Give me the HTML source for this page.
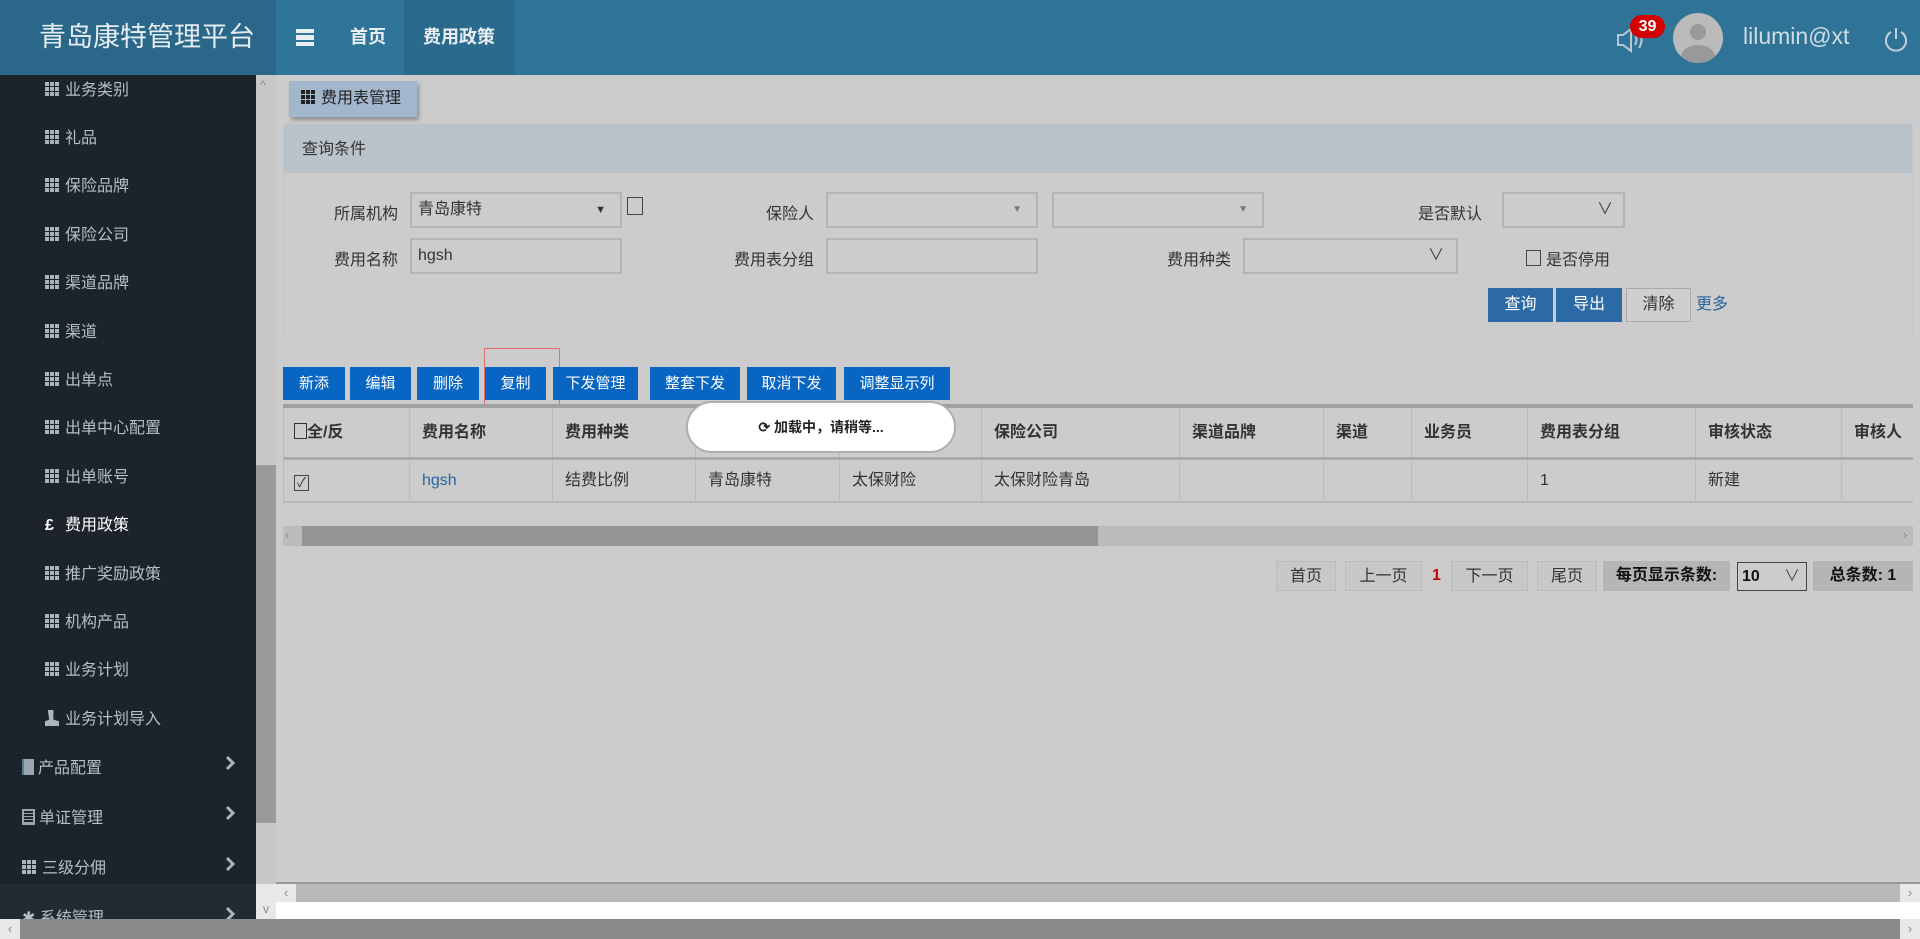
<!DOCTYPE html>
<html><head><meta charset="utf-8">
<style>
*{margin:0;padding:0;box-sizing:border-box}
body{width:1920px;height:939px;overflow:hidden;background:#ccc;font-family:"Liberation Sans","Noto Sans CJK SC",sans-serif;font-size:16px;color:#333;position:relative}
.a{position:absolute}
#hdr{left:0;top:0;width:1920px;height:75px;background:#2f7396}
#logo{left:0;top:0;width:276px;height:75px;background:#2b6788;color:#e6edf2;font-size:27px;line-height:75px;padding-left:39px}
.nav{top:0;height:75px;line-height:75px;color:#e8eef2;font-weight:bold;font-size:18px;text-align:center}
#side{left:0;top:75px;width:256px;height:844px;background:#1c232a;color:#b6bfc6;overflow:hidden}
.si{position:absolute;left:45px;font-size:16px;height:24px;line-height:24px}
.grid{display:inline-block;width:14px;height:14px;margin-right:6px;vertical-align:-1px;background:
linear-gradient(90deg,transparent 4px,#1c232a 4px,#1c232a 5px,transparent 5px,transparent 9px,#1c232a 9px,#1c232a 10px,transparent 10px),
linear-gradient(transparent 4px,#1c232a 4px,#1c232a 5px,transparent 5px,transparent 9px,#1c232a 9px,#1c232a 10px,transparent 10px),#aab4bc}
.arr{position:absolute;left:224px;width:12px;height:16px}
.btnb{position:absolute;top:367px;height:33px;background:#0866c2;color:#fff;font-size:15px;line-height:33px;text-align:center}
.lbl{position:absolute;font-size:16px;text-align:right;width:120px}
.inp{position:absolute;height:36px;border:2px solid #b4b4b4;background:#ccc;font-size:16px;line-height:32px;padding-left:6px}
.th,.td{position:absolute;font-size:16px;padding-left:12px;border-right:1px solid #bbb}
.th{top:408px;height:49px;line-height:49px;font-weight:bold}
.td{top:460px;height:41px;line-height:41px}
.pg{position:absolute;top:561px;height:30px;line-height:30px;font-size:16px;text-align:center;border:1px solid #bbb;background:#c8c8c8}
</style></head><body>
<div id="hdr" class="a"></div>
<div id="logo" class="a">青岛康特管理平台</div>
<div class="a nav" style="left:276px;width:128px;background:#2f7499"><span style="position:absolute;left:20px;top:29px;width:18px;height:17px;background:linear-gradient(#e8eef2 0 4px,transparent 4px 6px,#e8eef2 6px 11px,transparent 11px 13px,#e8eef2 13px 17px)"></span><span style="position:absolute;left:74px">首页</span></div>
<div class="a nav" style="left:404px;width:110px;background:#2a6a8c">费用政策</div>
<svg class="a" style="left:1615px;top:26px" width="32" height="28" viewBox="0 0 32 28"><path d="M3 9h5l8-6v22l-8-6H3z" fill="none" stroke="#b9c8d3" stroke-width="2"/><path d="M20 9q3 5 0 10M24 6q5 8 0 16" fill="none" stroke="#b9c8d3" stroke-width="2"/></svg>
<div class="a" style="left:1630px;top:15px;width:35px;height:23px;border-radius:12px;background:#d20000;color:#fff;font-weight:bold;font-size:16px;text-align:center;line-height:23px">39</div>
<div class="a" style="left:1673px;top:13px;width:50px;height:50px;border-radius:50%;background:#bbb;overflow:hidden"><div class="a" style="left:17px;top:11px;width:16px;height:16px;border-radius:50%;background:#999"></div><div class="a" style="left:8px;top:32px;width:34px;height:24px;border-radius:50%;background:#999"></div></div>
<div class="a" style="left:1743px;top:23px;color:#d0dce4;font-size:23px">lilumin@xt</div>
<svg class="a" style="left:1882px;top:26px" width="28" height="28" viewBox="0 0 28 28"><path d="M9 6A10 10 0 1 0 19 6" fill="none" stroke="#c4d1da" stroke-width="2"/><path d="M14 2v11" stroke="#c4d1da" stroke-width="2"/></svg>

<div id="side" class="a">
<div class="si" style="top:4px"><span class="grid"></span>业务类别</div>
<div class="si" style="top:52px"><span class="grid"></span>礼品</div>
<div class="si" style="top:100px"><span class="grid"></span>保险品牌</div>
<div class="si" style="top:149px"><span class="grid"></span>保险公司</div>
<div class="si" style="top:197px"><span class="grid"></span>渠道品牌</div>
<div class="si" style="top:246px"><span class="grid"></span>渠道</div>
<div class="si" style="top:294px"><span class="grid"></span>出单点</div>
<div class="si" style="top:342px"><span class="grid"></span>出单中心配置</div>
<div class="si" style="top:391px"><span class="grid"></span>出单账号</div>
<div class="si" style="top:439px;color:#fff"><span style="display:inline-block;width:14px;margin-right:6px;font-weight:bold">£</span>费用政策</div>
<div class="si" style="top:488px"><span class="grid"></span>推广奖励政策</div>
<div class="si" style="top:536px"><span class="grid"></span>机构产品</div>
<div class="si" style="top:584px"><span class="grid"></span>业务计划</div>
<div class="si" style="top:633px"><span style="display:inline-block;width:14px;height:16px;margin-right:6px;vertical-align:-2px;background:#aab4bc;clip-path:polygon(20% 0,60% 0,60% 60%,100% 70%,100% 100%,0 100%,0 70%,30% 60%)"></span>业务计划导入</div>
<div class="si" style="left:22px;top:682px"><span style="display:inline-block;width:12px;height:16px;margin-right:4px;vertical-align:-2px;background:#9aa6af;border-left:2px solid #5a7a90"></span>产品配置</div>
<svg class="arr" style="top:680px" viewBox="0 0 12 16"><path d="M3 2l6 6-6 6" fill="none" stroke="#a9b4bd" stroke-width="3"/></svg>
<div class="si" style="left:22px;top:732px"><span style="display:inline-block;width:13px;height:16px;margin-right:4px;vertical-align:-2px;border:2px solid #9aa6af;background:repeating-linear-gradient(#1c232a 0 2px,#9aa6af 2px 3px)"></span>单证管理</div>
<svg class="arr" style="top:730px" viewBox="0 0 12 16"><path d="M3 2l6 6-6 6" fill="none" stroke="#a9b4bd" stroke-width="3"/></svg>
<div class="si" style="left:22px;top:782px"><span class="grid"></span>三级分佣</div>
<svg class="arr" style="top:781px" viewBox="0 0 12 16"><path d="M3 2l6 6-6 6" fill="none" stroke="#a9b4bd" stroke-width="3"/></svg>
<div class="a" style="left:0;top:809px;width:256px;height:40px;background:#222b31"></div>
<div class="si" style="left:22px;top:832px">✱ 系统管理</div>
<svg class="arr" style="top:831px" viewBox="0 0 12 16"><path d="M3 2l6 6-6 6" fill="none" stroke="#a9b4bd" stroke-width="3"/></svg>
</div>
<div class="a" style="left:256px;top:75px;width:20px;height:827px;background:#c8c8c8"></div>
<div class="a" style="left:256px;top:465px;width:20px;height:358px;background:#9a9a9a"></div>
<div class="a" style="left:260px;top:78px;color:#888;font-size:12px">^</div>
<div class="a" style="left:256px;top:884px;width:20px;height:35px;background:#e8e8e8;color:#888;font-size:12px;text-align:center;line-height:50px">v</div>

<div class="a" style="left:289px;top:81px;width:128px;height:36px;background:#a2b6cc;box-shadow:2px 3px 4px rgba(0,0,0,.3);line-height:36px;padding-left:12px;font-size:16px;color:#222"><span class="grid" style="background:linear-gradient(90deg,transparent 4px,#a2b6cc 4px,#a2b6cc 5px,transparent 5px,transparent 9px,#a2b6cc 9px,#a2b6cc 10px,transparent 10px),linear-gradient(transparent 4px,#a2b6cc 4px,#a2b6cc 5px,transparent 5px,transparent 9px,#a2b6cc 9px,#a2b6cc 10px,transparent 10px),#222"></span>费用表管理</div>

<div class="a" style="left:283px;top:123px;width:1630px;height:218px;border:1px solid #c3c8cd"></div>
<div class="a" style="left:284px;top:124px;width:1628px;height:49px;background:#bbc3ca;line-height:51px;padding-left:18px;font-size:16px">查询条件</div>

<div class="lbl" style="left:278px;top:200px">所属机构</div>
<div class="inp" style="left:410px;top:192px;width:212px">青岛康特<span style="position:absolute;right:14px;font-size:11px">▼</span></div>
<div class="a" style="left:627px;top:197px;width:16px;height:18px;border:1px solid #444"></div>
<div class="lbl" style="left:694px;top:200px">保险人</div>
<div class="inp" style="left:826px;top:192px;width:212px"><span style="position:absolute;right:14px;font-size:10px;color:#777">▼</span></div>
<div class="inp" style="left:1052px;top:192px;width:212px"><span style="position:absolute;right:14px;font-size:10px;color:#777">▼</span></div>
<div class="lbl" style="left:1362px;top:200px">是否默认</div>
<div class="inp" style="left:1502px;top:192px;width:123px"><span style="position:absolute;right:10px;color:#444">∨</span></div>

<div class="lbl" style="left:278px;top:246px">费用名称</div>
<div class="inp" style="left:410px;top:238px;width:212px">hgsh</div>
<div class="lbl" style="left:694px;top:246px">费用表分组</div>
<div class="inp" style="left:826px;top:238px;width:212px"></div>
<div class="lbl" style="left:1111px;top:246px">费用种类</div>
<div class="inp" style="left:1243px;top:238px;width:215px"><span style="position:absolute;right:12px;color:#444">∨</span></div>
<div class="a" style="left:1526px;top:250px;width:15px;height:16px;border:1px solid #444"></div>
<div class="a" style="left:1546px;top:246px;font-size:16px">是否停用</div>

<div class="a" style="left:1488px;top:288px;width:65px;height:34px;background:#2b6aa5;color:#fff;text-align:center;line-height:34px">查询</div>
<div class="a" style="left:1556px;top:288px;width:66px;height:34px;background:#2b6aa5;color:#fff;text-align:center;line-height:34px">导出</div>
<div class="a" style="left:1626px;top:288px;width:65px;height:34px;border:1px solid #aaa;background:#cfcfcf;text-align:center;line-height:32px">清除</div>
<div class="a" style="left:1696px;top:290px;color:#2a64a0">更多</div>

<div class="btnb" style="left:283px;width:62px">新添</div>
<div class="btnb" style="left:350px;width:61px">编辑</div>
<div class="btnb" style="left:417px;width:62px">删除</div>
<div class="btnb" style="left:485px;width:61px">复制</div>
<div class="a" style="left:484px;top:348px;width:76px;height:58px;border:1px solid #e07070"></div>
<div class="btnb" style="left:553px;width:85px">下发管理</div>
<div class="btnb" style="left:650px;width:90px">整套下发</div>
<div class="btnb" style="left:747px;width:89px">取消下发</div>
<div class="btnb" style="left:844px;width:106px">调整显示列</div>

<div class="a" style="left:283px;top:404px;width:1630px;height:4px;background:#a0a0a0"></div>
<div class="a" style="left:283px;top:457px;width:1630px;height:3px;background:#aaa"></div>
<div class="a" style="left:283px;top:501px;width:1630px;height:2px;background:#b8b8b8"></div>
<div class="a" style="left:283px;top:408px;width:1px;height:93px;background:#bbb"></div>
<div class="th" style="left:284px;width:126px;padding-left:10px"><span style="display:inline-block;width:13px;height:16px;border:1px solid #333;vertical-align:-2px"></span>全/反</div>
<div class="th" style="left:410px;width:143px">费用名称</div>
<div class="th" style="left:553px;width:143px">费用种类</div>
<div class="th" style="left:696px;width:144px">所属机构</div>
<div class="th" style="left:840px;width:142px">保险人</div>
<div class="th" style="left:982px;width:198px">保险公司</div>
<div class="th" style="left:1180px;width:144px">渠道品牌</div>
<div class="th" style="left:1324px;width:88px">渠道</div>
<div class="th" style="left:1412px;width:116px">业务员</div>
<div class="th" style="left:1528px;width:168px">费用表分组</div>
<div class="th" style="left:1696px;width:146px">审核状态</div>
<div class="th" style="left:1842px;width:71px;border:0">审核人</div>
<div class="td" style="left:284px;width:126px;padding-left:10px"><span style="display:inline-block;width:15px;height:16px;border:1px solid #444;font-size:13px;line-height:14px;text-align:center;vertical-align:-2px">✓</span></div>
<div class="td" style="left:410px;width:143px;color:#2a64a0">hgsh</div>
<div class="td" style="left:553px;width:143px">结费比例</div>
<div class="td" style="left:696px;width:144px">青岛康特</div>
<div class="td" style="left:840px;width:142px">太保财险</div>
<div class="td" style="left:982px;width:198px">太保财险青岛</div>
<div class="td" style="left:1180px;width:144px"></div>
<div class="td" style="left:1324px;width:88px"></div>
<div class="td" style="left:1412px;width:116px"></div>
<div class="td" style="left:1528px;width:168px">1</div>
<div class="td" style="left:1696px;width:146px">新建</div>
<div class="td" style="left:1842px;width:71px;border:0"></div>

<div class="a" style="left:686px;top:401px;width:270px;height:52px;border-radius:26px;background:#fff;border:2px solid #a8b0b6;text-align:center;line-height:48px;font-size:14px;color:#222;font-weight:bold">⟳ 加载中，请稍等...</div>

<div class="a" style="left:283px;top:526px;width:1630px;height:20px;background:#bcbcbc"></div>
<div class="a" style="left:302px;top:526px;width:796px;height:20px;background:#959595"></div>
<div class="a" style="left:285px;top:527px;color:#888;font-size:13px">‹</div>
<div class="a" style="left:1903px;top:527px;color:#888;font-size:13px">›</div>

<div class="pg" style="left:1276px;width:60px">首页</div>
<div class="pg" style="left:1345px;width:77px">上一页</div>
<div class="a" style="left:1432px;top:561px;line-height:30px;color:#c00;font-weight:bold">1</div>
<div class="pg" style="left:1451px;width:77px">下一页</div>
<div class="pg" style="left:1537px;width:60px">尾页</div>
<div class="a" style="left:1603px;top:561px;width:127px;height:30px;background:#b5b5b5;font-weight:bold;line-height:30px;text-align:center;color:#111">每页显示条数:</div>
<div class="a" style="left:1737px;top:562px;width:70px;height:29px;border:1px solid #444;background:#ccc;line-height:27px;padding-left:4px;font-weight:bold;color:#111">10<span style="position:absolute;right:6px;font-weight:normal;color:#555">∨</span></div>
<div class="a" style="left:1813px;top:561px;width:100px;height:30px;background:#b5b5b5;font-weight:bold;line-height:30px;text-align:center;color:#111">总条数: 1</div>

<div class="a" style="left:276px;top:882px;width:1644px;height:2px;background:#999"></div>
<div class="a" style="left:276px;top:884px;width:1644px;height:18px;background:#b9b9b9"></div>
<div class="a" style="left:276px;top:884px;width:20px;height:18px;background:#e8e8e8;color:#888;font-size:13px;text-align:center;line-height:18px">‹</div>
<div class="a" style="left:1900px;top:884px;width:20px;height:18px;background:#e8e8e8;color:#888;font-size:13px;text-align:center;line-height:18px">›</div>
<div class="a" style="left:276px;top:902px;width:1644px;height:17px;background:#fff"></div>
<div class="a" style="left:0;top:919px;width:1920px;height:20px;background:#8a8a8a"></div>
<div class="a" style="left:0;top:919px;width:20px;height:20px;background:#e8e8e8;color:#888;font-size:13px;text-align:center;line-height:20px">‹</div>
<div class="a" style="left:1900px;top:919px;width:20px;height:20px;background:#e8e8e8;color:#888;font-size:13px;text-align:center;line-height:20px">›</div>
</body></html>
